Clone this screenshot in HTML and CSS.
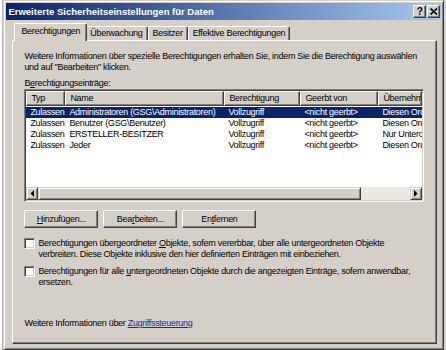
FILE: index.html
```html
<!DOCTYPE html>
<html>
    <head>
        <meta charset="UTF-8">
        <title>Erweiterte Sicherheitseinstellungen für Daten</title>
        <link rel="stylesheet" href="styles.css">
    </head>
    <body>
        <div class="screen">
            <div class="behind"></div>

            <div class="dialog">
                <div class="titlebar">
                    <span class="title">Erweiterte Sicherheitseinstellungen für Daten</span>
                    <div class="caption-buttons">
                        <span class="cap-btn">?</span>
                        <span class="cap-btn">
                            <svg width="8" height="7" viewBox="0 0 8 7">
                                <path d="M0.5 0.5 L7 6.5 M7 0.5 L0.5 6.5" stroke="#000" stroke-width="1.6" fill="none" />
                            </svg>
                        </span>
                    </div>
                </div>

                <div class="dialog-body">
                    <div class="tabs">
                        <div class="tab active">Berechtigungen</div>
                        <div class="tab">Überwachung</div>
                        <div class="tab">Besitzer</div>
                        <div class="tab">Effektive Berechtigungen</div>
                    </div>

                    <div class="panel">
                        <p class="intro">Weitere Informationen über spezielle Berechtigungen erhalten Sie, indem Sie die Berechtigung auswählen<br>und auf "Bearbeiten" klicken.</p>

                        <div class="field-label">B<u>e</u>rechtigungseinträge:</div>

                        <div class="listview">
                            <div class="lv-header lv-cols">
                                <div class="hcell">Typ</div>
                                <div class="hcell">Name</div>
                                <div class="hcell">Berechtigung</div>
                                <div class="hcell">Geerbt von</div>
                                <div class="hcell">Übernehm</div>
                            </div>
                            <div class="lv-rows">
                                <div class="lv-row lv-cols selected">
                                    <span>Zulassen</span><span>Administratoren (GSG\Administratoren)</span><span>Vollzugriff</span><span>&lt;nicht geerbt&gt;</span><span>Diesen Ordner</span>
                                </div>
                                <div class="lv-row lv-cols">
                                    <span>Zulassen</span><span>Benutzer (GSG\Benutzer)</span><span>Vollzugriff</span><span>&lt;nicht geerbt&gt;</span><span>Diesen Ordner</span>
                                </div>
                                <div class="lv-row lv-cols">
                                    <span>Zulassen</span><span>ERSTELLER-BESITZER</span><span>Vollzugriff</span><span>&lt;nicht geerbt&gt;</span><span>Nur Unterordner</span>
                                </div>
                                <div class="lv-row lv-cols">
                                    <span>Zulassen</span><span>Jeder</span><span>Vollzugriff</span><span>&lt;nicht geerbt&gt;</span><span>Diesen Ordner</span>
                                </div>
                            </div>
                            <div class="hscroll">
                                <div class="sb-btn">
                                    <svg width="4" height="7" viewBox="0 0 4 7"><path d="M4 0 L0.5 3.5 L4 7 Z" fill="#000" /></svg>
                                </div>
                                <div class="sb-thumb"></div>
                                <div class="sb-track"></div>
                                <div class="sb-btn">
                                    <svg width="4" height="7" viewBox="0 0 4 7"><path d="M0 0 L3.5 3.5 L0 7 Z" fill="#000" /></svg>
                                </div>
                            </div>
                        </div>

                        <div class="button-row">
                            <div class="button"><u>H</u>inzufügen...</div>
                            <div class="button">Bea<u>r</u>beiten...</div>
                            <div class="button">En<u>t</u>fernen</div>
                        </div>

                        <div class="check">
                            <span class="check-box"></span>
                            <span>Berechtigungen übergeordneter <u>O</u>bjekte, sofern vererbbar, über alle untergeordneten Objekte<br>verbreiten. Diese Objekte inklusive den hier definierten Einträgen mit einbeziehen.</span>
                        </div>
                        <div class="check">
                            <span class="check-box"></span>
                            <span>Berechtigungen für alle <u>u</u>ntergeordneten Objekte durch die angezeigten Einträge, sofern anwendbar,<br>ersetzen.</span>
                        </div>

                        <div class="more-info">Weitere Informationen über <a href="#">Zugriffssteuerung</a></div>
                    </div>
                </div>
            </div>

            <div class="behind right"></div>
        </div>
    </body>
</html>
```

FILE: styles.css
```css
html, body {
    margin: 0;
    padding: 0;
    background: #fff;
    font-family: "Liberation Sans", Arial, sans-serif;
    font-size: 9px;
    letter-spacing: -0.3px;
    color: #000;
}
.screen {
    display: flex;
    width: 446px;
    height: 350px;
    overflow: hidden;
}
.behind {
    width: 3px;
    background: #fff;
    border-right: 1px solid #b8b8b8;
}
.behind.right {
    width: 2px;
    background: #d4d0c8;
    border-right: none;
}

/* window frame */
.dialog {
    width: 441px;
    flex-shrink: 0;
    box-sizing: border-box;
    background: #d4d0c8;
    border: 1px solid;
    border-color: #d4d0c8 #404040 #404040 #d4d0c8;
    box-shadow: inset 1px 1px #fff, inset -1px -1px #808080;
    padding: 2px 2px 0 2px;
}
.titlebar {
    display: flex;
    align-items: center;
    justify-content: space-between;
    height: 17px;
    padding-left: 2px;
    background: linear-gradient(to right, #0a246a, #a6caf0);
}
.title {
    color: #fff;
    font-weight: bold;
    font-size: 9.5px;
    letter-spacing: 0;
}
.caption-buttons {
    display: flex;
    padding-right: 1px;
}
.cap-btn {
    display: flex;
    align-items: center;
    justify-content: center;
    width: 13px;
    height: 13px;
    box-sizing: border-box;
    background: #d4d0c8;
    border: 1px solid;
    border-color: #fff #404040 #404040 #fff;
    box-shadow: inset -1px -1px #808080;
    font-weight: bold;
    font-size: 10px;
    letter-spacing: 0;
}
.cap-btn + .cap-btn {
    margin-left: 1px;
}

/* tabs */
.dialog-body {
    padding: 3px 0 0 6px;
}
.tabs {
    display: flex;
    align-items: flex-end;
    height: 17px;
    padding-left: 4px;
}
.tab {
    height: 14px;
    line-height: 13px;
    padding: 0 4px;
    box-sizing: border-box;
    border: 1px solid;
    border-bottom: none;
    border-color: #fff #404040 #fff #fff;
    border-radius: 2px 2px 0 0;
    box-shadow: inset -1px 0 #808080;
}
.tab.active {
    position: relative;
    z-index: 1;
    height: 18px;
    line-height: 15px;
    margin: 0 -2px -1px -2px;
    padding: 0 6px;
    background: #d4d0c8;
}

.panel {
    display: flex;
    flex-direction: column;
    width: 425px;
    height: 304px;
    box-sizing: border-box;
    border: 1px solid;
    border-color: #fff #404040 #404040 #fff;
    box-shadow: inset -1px -1px #808080;
    padding: 10px 12px 14px 11px;
}
.intro {
    margin: 0;
    line-height: 11px;
}
.field-label {
    margin-top: 5px;
    line-height: 11px;
}

/* list view */
.listview {
    display: flex;
    flex-direction: column;
    height: 113px;
    box-sizing: border-box;
    border: 1px solid;
    border-color: #808080 #fff #fff #808080;
    box-shadow: inset 1px 1px #404040, inset -1px -1px #d4d0c8;
    padding: 1px;
    background: #fff;
}
.lv-cols {
    display: grid;
    grid-template-columns: 39px 159px 76px 78px 1fr;
}
.lv-header {
    height: 15px;
}
.hcell {
    box-sizing: border-box;
    background: #d4d0c8;
    border: 1px solid;
    border-color: #fff #404040 #404040 #fff;
    box-shadow: inset -1px -1px #808080;
    line-height: 13px;
    padding-left: 4px;
    white-space: nowrap;
    overflow: hidden;
}
.lv-rows {
    flex: 1;
    padding-top: 1px;
}
.lv-row {
    height: 11px;
    line-height: 11px;
}
.lv-row > span {
    padding-left: 4px;
    white-space: nowrap;
    overflow: hidden;
}
.lv-row.selected {
    background: #0a246a;
    color: #fff;
}
.hscroll {
    display: flex;
    height: 13px;
}
.sb-btn, .sb-thumb {
    box-sizing: border-box;
    background: #d4d0c8;
    border: 1px solid;
    border-color: #d4d0c8 #404040 #404040 #d4d0c8;
    box-shadow: inset 1px 1px #fff, inset -1px -1px #808080;
}
.sb-btn {
    display: flex;
    align-items: center;
    justify-content: center;
    width: 12px;
}
.sb-thumb {
    width: 323px;
}
.sb-track {
    flex: 1;
    background: #ebe9e5;
}

/* buttons & checkboxes */
.button-row {
    display: flex;
    gap: 5px;
    margin-top: 8px;
}
.button {
    width: 74px;
    height: 18px;
    box-sizing: border-box;
    border: 1px solid;
    border-color: #fff #404040 #404040 #fff;
    box-shadow: inset -1px -1px #808080;
    text-align: center;
    line-height: 16px;
}
.check {
    display: flex;
    align-items: flex-start;
    gap: 3px;
    margin-top: 10px;
    line-height: 11px;
}
.check + .check {
    margin-top: 6px;
}
.check-box {
    flex-shrink: 0;
    width: 11px;
    height: 11px;
    box-sizing: border-box;
    border: 1px solid;
    border-color: #808080 #fff #fff #808080;
    box-shadow: inset 1px 1px #404040, inset -1px -1px #d4d0c8;
    background: #fff;
}
.more-info {
    margin-top: auto;
    line-height: 11px;
}
.more-info a {
    color: #1e2a9c;
}
```
